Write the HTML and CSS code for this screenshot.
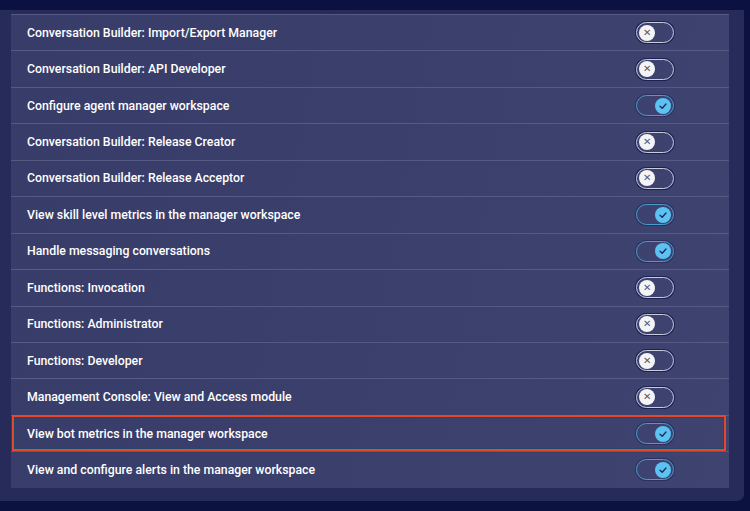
FILE: index.html
```html
<!DOCTYPE html>
<html>
<head>
<meta charset="utf-8">
<link rel="stylesheet" href="styles.css">
</head>
<body>
<div class="topband"></div>
<div class="panel">
  <div class="list">
    <div class="row"><span class="label">Conversation Builder: Import/Export Manager</span><span class="toggle off"><span class="knob">&#x2715;</span></span></div>
    <div class="row"><span class="label">Conversation Builder: API Developer</span><span class="toggle off"><span class="knob">&#x2715;</span></span></div>
    <div class="row"><span class="label">Configure agent manager workspace</span><span class="toggle on"><span class="knob"><svg viewBox="0 0 10 10" width="10" height="10"><path d="M2 5.3 L4.2 7.3 L8 3" fill="none" stroke="#1d2a56" stroke-width="1.3" stroke-linecap="round" stroke-linejoin="round"/></svg></span></span></div>
    <div class="row"><span class="label">Conversation Builder: Release Creator</span><span class="toggle off"><span class="knob">&#x2715;</span></span></div>
    <div class="row"><span class="label">Conversation Builder: Release Acceptor</span><span class="toggle off"><span class="knob">&#x2715;</span></span></div>
    <div class="row"><span class="label">View skill level metrics in the manager workspace</span><span class="toggle on"><span class="knob"><svg viewBox="0 0 10 10" width="10" height="10"><path d="M2 5.3 L4.2 7.3 L8 3" fill="none" stroke="#1d2a56" stroke-width="1.3" stroke-linecap="round" stroke-linejoin="round"/></svg></span></span></div>
    <div class="row"><span class="label">Handle messaging conversations</span><span class="toggle on"><span class="knob"><svg viewBox="0 0 10 10" width="10" height="10"><path d="M2 5.3 L4.2 7.3 L8 3" fill="none" stroke="#1d2a56" stroke-width="1.3" stroke-linecap="round" stroke-linejoin="round"/></svg></span></span></div>
    <div class="row"><span class="label">Functions: Invocation</span><span class="toggle off"><span class="knob">&#x2715;</span></span></div>
    <div class="row"><span class="label">Functions: Administrator</span><span class="toggle off"><span class="knob">&#x2715;</span></span></div>
    <div class="row"><span class="label">Functions: Developer</span><span class="toggle off"><span class="knob">&#x2715;</span></span></div>
    <div class="row"><span class="label">Management Console: View and Access module</span><span class="toggle off"><span class="knob">&#x2715;</span></span></div>
    <div class="row highlighted"><span class="label">View bot metrics in the manager workspace</span><span class="toggle on"><span class="knob"><svg viewBox="0 0 10 10" width="10" height="10"><path d="M2 5.3 L4.2 7.3 L8 3" fill="none" stroke="#1d2a56" stroke-width="1.3" stroke-linecap="round" stroke-linejoin="round"/></svg></span></span></div>
    <div class="row"><span class="label">View and configure alerts in the manager workspace</span><span class="toggle on"><span class="knob"><svg viewBox="0 0 10 10" width="10" height="10"><path d="M2 5.3 L4.2 7.3 L8 3" fill="none" stroke="#1d2a56" stroke-width="1.3" stroke-linecap="round" stroke-linejoin="round"/></svg></span></span></div>
  </div>
</div>
</body>
</html>
```
FILE: styles.css
```css
* { box-sizing: border-box; }
html, body { margin: 0; padding: 0; }
body {
  width: 750px;
  height: 511px;
  background: #0c1240;
  font-family: Roboto, "Liberation Sans", sans-serif;
  overflow: hidden;
}
.topband { height: 10px; background: #0b1140; }
.panel {
  width: 744px;
  height: 491px;
  background: #272b5a;
  border-radius: 0 0 7px 0;
  padding: 4px 15px 0 11px;
}
.list {
  width: 718px;
  background: linear-gradient(100deg, #383c68 0%, #3b3f6c 50%, #3e4370 100%);
}
.row {
  height: 36.45px;
  border-top: 1px solid #575b83;
  display: flex;
  align-items: center;
  justify-content: space-between;
  padding: 0 55px 0 16px;
  position: relative;
}
.row.highlighted::after {
  content: "";
  position: absolute;
  left: 1px; right: 3px; top: -1px; bottom: 0;
  border: 2px solid #e6462a;
  box-shadow: inset 0 0 0 1px #1f4a6e;
}
.label {
  color: #ffffff;
  font-size: 12.3px;
  font-weight: 500;
}
.toggle {
  width: 38px;
  height: 21px;
  border-radius: 11px;
  display: flex;
  align-items: center;
  padding: 0 2px;
}
.toggle.off {
  border: 1.5px solid #c9ccdc;
  box-shadow: 0 0 0 1px #1c2150;
}
.toggle.on {
  border: 1.5px solid #4a9ccc;
  justify-content: flex-end;
  box-shadow: 0 0 0 1px #2a3160;
}
.knob {
  width: 16px;
  height: 16px;
  border-radius: 50%;
  display: flex;
  align-items: center;
  justify-content: center;
}
.off .knob {
  background: #f4f4f7;
  color: #555a70;
  font-size: 10px;
  line-height: 1;
}
.on .knob {
  background: #5bc2f2;
}
```
